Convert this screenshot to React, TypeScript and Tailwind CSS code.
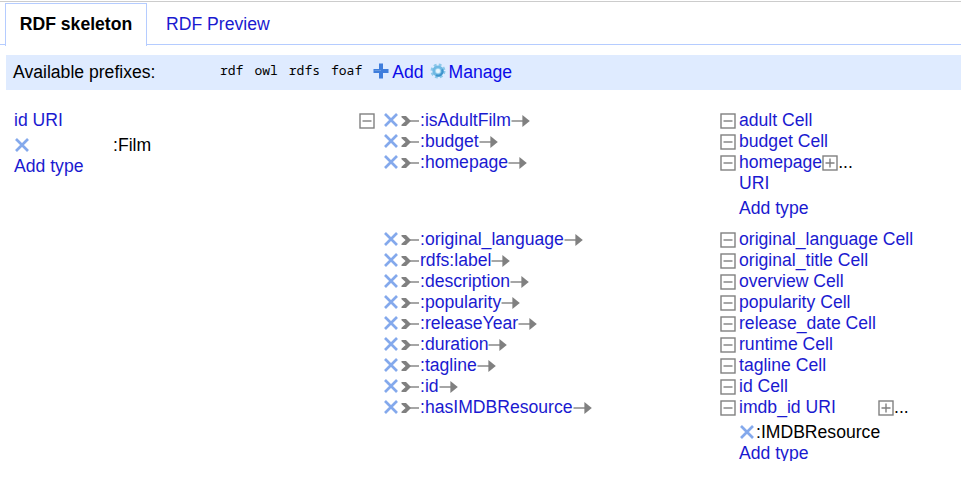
import type { ReactNode } from "react";

function Toggle({ plus = false }: { plus?: boolean }) {
  return (
    <svg width="16" height="16" viewBox="0 0 16 16" className="shrink-0" fill="none" stroke="#808080">
      <rect x="1" y="1" width="14" height="14" strokeWidth="1.4" fill="#fff" />
      <path d={plus ? "M3.5 8h9M8 3.5v9" : "M3.5 8h9"} strokeWidth="1.4" />
    </svg>
  );
}

function Cross() {
  return (
    <svg width="14" height="14" viewBox="0 0 14 14" className="shrink-0" stroke="#84a9ec" strokeWidth="2.7">
      <path d="M1 1L13 13M13 1L1 13" />
    </svg>
  );
}

function Tail() {
  return (
    <svg width="18" height="12" viewBox="0 0 18 12" className="shrink-0" fill="#808080">
      <path d="M0.5 1H5L10 6L5 11H0.5V9.8L4.6 6L0.5 2.2Z" />
      <path d="M8 5.3h10v1.4H8z" />
    </svg>
  );
}

function Arrow() {
  return (
    <svg width="19" height="12" viewBox="0 0 19 12" className="shrink-0" fill="#808080">
      <path d="M0.5 5.3h12v1.4h-12z" />
      <path d="M11.4 0L18.8 6L11.4 12z" />
    </svg>
  );
}

function PlusIcon() {
  return (
    <svg width="16" height="16" viewBox="0 0 16 16" className="shrink-0">
      <path d="M6 0.5h4V6h5.5v4H10v5.5H6V10H0.5V6H6z" fill="#3f7ddc" />
      <path d="M7 1.5h1V7H1.5v1H8V1.5z" fill="#6397df" />
    </svg>
  );
}

function Gear() {
  return (
    <svg width="16" height="16" viewBox="0 0 16 16" className="shrink-0">
      <circle cx="8" cy="8" r="6.2" fill="none" stroke="#8cc8ea" strokeWidth="2.6" strokeDasharray="2.7 2.17" />
      <circle cx="8" cy="8" r="4.2" fill="#b5ddf3" stroke="#6fb9e4" strokeWidth="2.8" />
      <path d="M12.2 6.4A4.5 4.5 0 0 1 6 12.2" fill="none" stroke="#3f93cc" strokeWidth="2" />
      <circle cx="8" cy="8" r="2" fill="#e9f6ff" />
    </svg>
  );
}

function Property({ name }: { name: string }) {
  return (
    <div className="flex h-[21px] items-center text-[#1a1ad0]">
      <span className="pb-px"><Cross /></span>
      <span className="ml-[3px] pt-px"><Tail /></span>
      <span className="ml-px">{name}</span>
      <span className="pt-px"><Arrow /></span>
    </div>
  );
}

function Target({ children }: { children: ReactNode }) {
  return (
    <div className="flex h-[21px] items-center text-[#1a1ad0]">
      <span className="mr-[3px] pt-px"><Toggle /></span>
      {children}
    </div>
  );
}

const firstProperties = [":isAdultFilm", ":budget", ":homepage"];
const otherProperties = [
  ":original_language", "rdfs:label", ":description", ":popularity", ":releaseYear",
  ":duration", ":tagline", ":id", ":hasIMDBResource",
];
const otherTargets = [
  "original_language Cell", "original_title Cell", "overview Cell", "popularity Cell",
  "release_date Cell", "runtime Cell", "tagline Cell", "id Cell",
];

export default function App() {
  return (
    <div className="h-[483px] w-[961px] overflow-hidden bg-white pt-px font-['Liberation_Sans',Arial,sans-serif] text-[17.6px] leading-[21px] whitespace-nowrap text-black">
      <div className="flex h-[44px] border-t border-[#cccccc]">
        <div className="w-[5px] border-b border-[#b5ccff]" />
        <div className="mt-px -mb-px flex w-[142px] items-center justify-center border border-b-0 border-[#b5ccff] pb-px font-bold">
          RDF skeleton
        </div>
        <div className="flex flex-1 items-center border-b border-[#b5ccff] pt-[2px] pl-[19px] text-[#1a1ad0]">
          RDF Preview
        </div>
      </div>

      <div className="mt-[10px] ml-[6px] flex h-[35px] items-center bg-[#dfebff] pl-[7px]">
        <span className="w-[207px]">Available prefixes:</span>
        <div className="flex gap-[11px] pb-[4px] font-['Noto_Sans_Mono','DejaVu_Sans_Mono',monospace] text-[13px]">
          <span>rdf</span><span>owl</span><span>rdfs</span><span>foaf</span>
        </div>
        <div className="ml-[11px] flex items-center text-[#0b0be8]">
          <span className="pb-[4px]"><PlusIcon /></span>
          <span className="ml-[3px]">Add</span>
          <span className="ml-[6px] pb-[3px]"><Gear /></span>
          <span className="ml-[3px]">Manage</span>
        </div>
      </div>

      <div className="mt-[20px] flex pl-[14px]">
        <div className="w-[345px] text-[#1a1ad0]">
          <div>id URI</div>
          <div className="mt-[4px] flex items-center">
            <span className="w-[99px] pb-px pl-px"><Cross /></span>
            <span className="text-black">:Film</span>
          </div>
          <div>Add type</div>
        </div>
        <div className="w-[25px] pt-[3px]"><Toggle /></div>
        <div className="w-[337px]">
          {firstProperties.map((name) => <Property key={name} name={name} />)}
          <div className="h-[56px]" />
          {otherProperties.map((name) => <Property key={name} name={name} />)}
        </div>
        <div className="-ml-px text-[#1a1ad0]">
          <Target>adult Cell</Target>
          <Target>budget Cell</Target>
          <Target>
            homepage
            <span className="pt-px"><Toggle plus /></span>
            <span className="text-black">...</span>
          </Target>
          <div className="h-[25px] pl-[19px]">URI</div>
          <div className="h-[31px] pl-[19px]">Add type</div>
          {otherTargets.map((name) => <Target key={name}>{name}</Target>)}
          <Target>
            <span className="w-[139px]">imdb_id URI</span>
            <span className="pt-px"><Toggle plus /></span>
            <span className="text-black">...</span>
          </Target>
          <div className="mt-[4px] flex items-center pl-[20px]">
            <span className="mr-[2px] pb-px"><Cross /></span>
            <span className="text-black">:IMDBResource</span>
          </div>
          <div className="h-[18px] overflow-hidden pl-[19px]">Add type</div>
        </div>
      </div>
    </div>
  );
}
